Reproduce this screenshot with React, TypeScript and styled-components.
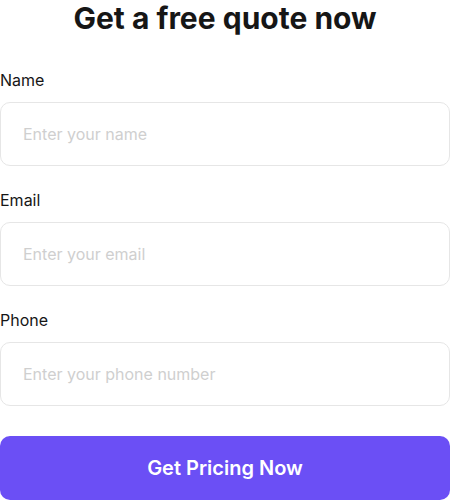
import React from "react";
import styled, { createGlobalStyle } from "styled-components";

const Global = createGlobalStyle`
  html, body { margin: 0; padding: 0; background: #fff; }
  body { font-family: Inter, "Noto Sans", sans-serif; color: #111; }
  * { box-sizing: border-box; }
`;

const Form = styled.form`
  width: 450px;
  display: flex;
  flex-direction: column;
`;

const Title = styled.h1`
  margin: 0 0 32px;
  font-size: 30px;
  line-height: 36px;
  font-weight: 700;
  text-align: center;
  color: #161616;
`;

const Field = styled.div`
  display: flex;
  flex-direction: column;
  margin-bottom: 22px;
`;

const Label = styled.label`
  font-size: 16px;
  line-height: 24px;
  font-weight: 400;
  color: #161616;
  margin-bottom: 10px;
`;

const Input = styled.input`
  height: 64px;
  width: 100%;
  border: 1px solid #e6e6e6;
  border-radius: 10px;
  padding: 0 22px;
  font-family: Inter, sans-serif;
  font-size: 16px;
  color: #161616;
  outline: none;
  background: #fff;
  &::placeholder { color: #cfcfcf; }
`;

const Button = styled.button`
  margin-top: 8px;
  height: 64px;
  width: 100%;
  border: none;
  border-radius: 10px;
  background: #6b4ff5;
  color: #fff;
  font-family: Inter, sans-serif;
  font-size: 20px;
  font-weight: 600;
  cursor: pointer;
`;

const fields = [
  { id: "name", label: "Name", placeholder: "Enter your name", type: "text" },
  { id: "email", label: "Email", placeholder: "Enter your email", type: "email" },
  { id: "phone", label: "Phone", placeholder: "Enter your phone number", type: "tel" },
];

export default function App() {
  return (
    <>
      <Global />
      <Form onSubmit={(e) => e.preventDefault()}>
        <Title>Get a free quote now</Title>
        {fields.map((f) => (
          <Field key={f.id}>
            <Label htmlFor={f.id}>{f.label}</Label>
            <Input id={f.id} type={f.type} placeholder={f.placeholder} />
          </Field>
        ))}
        <Button type="submit">Get Pricing Now</Button>
      </Form>
    </>
  );
}
